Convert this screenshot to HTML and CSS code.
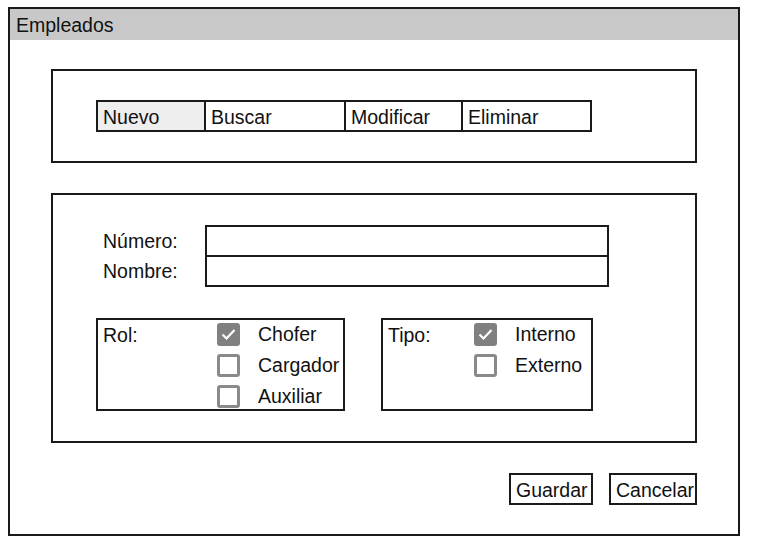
FILE: index.html
```html
<!DOCTYPE html>
<html lang="es">
<head>
<meta charset="utf-8">
<title>Empleados</title>
<link rel="stylesheet" href="styles.css">
</head>
<body>
<div class="window">
  <div class="titlebar">Empleados</div>
  <div class="content">
    <section class="panel panel-toolbar">
      <div class="toolbar">
        <div class="tab tab-nuevo active">Nuevo</div>
        <div class="tab tab-buscar">Buscar</div>
        <div class="tab tab-modificar">Modificar</div>
        <div class="tab tab-eliminar">Eliminar</div>
      </div>
    </section>
    <section class="panel panel-form">
      <div class="fields">
        <div class="field-row"><label class="field-label">Número:</label><div class="input"></div></div>
        <div class="field-row second"><label class="field-label">Nombre:</label><div class="input"></div></div>
      </div>
      <div class="groups">
        <div class="group group-rol">
          <div class="group-label">Rol:</div>
          <div class="options">
            <div class="option"><span class="box checked"><svg viewBox="0 0 23 23" width="23" height="23"><path d="M5.5 11.5 L9.5 15.5 L17.5 7" fill="none" stroke="#fff" stroke-width="2.2"/></svg></span><span>Chofer</span></div>
            <div class="option"><span class="box"></span><span>Cargador</span></div>
            <div class="option"><span class="box"></span><span>Auxiliar</span></div>
          </div>
        </div>
        <div class="group group-tipo">
          <div class="group-label">Tipo:</div>
          <div class="options">
            <div class="option"><span class="box checked"><svg viewBox="0 0 23 23" width="23" height="23"><path d="M5.5 11.5 L9.5 15.5 L17.5 7" fill="none" stroke="#fff" stroke-width="2.2"/></svg></span><span>Interno</span></div>
            <div class="option"><span class="box"></span><span>Externo</span></div>
          </div>
        </div>
      </div>
    </section>
    <div class="actions">
      <button class="btn btn-guardar">Guardar</button>
      <button class="btn btn-cancelar">Cancelar</button>
    </div>
  </div>
</div>
</body>
</html>
```
FILE: styles.css
```css
* { box-sizing: border-box; }
body {
  margin: 0;
  background: #fff;
  font-family: "Liberation Sans", Arial, sans-serif;
  font-size: 19.5px;
  color: #111;
}
.window {
  margin: 7px 0 0 8px;
  width: 732px;
  height: 529px;
  border: 2px solid #1a1a1a;
  display: flex;
  flex-direction: column;
}
.titlebar {
  height: 31px;
  line-height: 31px;
  padding-top: 1px;
  background: #c8c8c8;
  padding-left: 6px;
}
.content {
  padding: 29px 41px 0 41px;
  display: flex;
  flex-direction: column;
}
.panel {
  border: 2px solid #1a1a1a;
}
.panel-toolbar {
  padding: 29px 43px;
}
.toolbar {
  display: flex;
  width: fit-content;
  height: 32px;
  border: 2px solid #1a1a1a;
}
.tab {
  line-height: 25px;
  padding: 3px 0 0 5px;
  border-left: 2px solid #1a1a1a;
}
.tab-nuevo { width: 106px; border-left: none; }
.tab-buscar { width: 140px; }
.tab-modificar { width: 117px; }
.tab-eliminar { width: 129px; }
.tab.active { background: #eeeeee; }

.panel-form {
  margin-top: 30px;
  height: 250px;
  padding: 30px 0 0 43px;
}
.field-row {
  display: flex;
  align-items: center;
}
.field-row.second { margin-top: -2px; }
.field-label {
  width: 109px;
  padding-left: 7px;
  padding-top: 1px;
}
.input {
  width: 404px;
  height: 32px;
  border: 2px solid #1a1a1a;
}
.groups {
  display: flex;
  gap: 36px;
  margin-top: 31px;
}
.group {
  display: flex;
  height: 93px;
  border: 2px solid #1a1a1a;
  padding-left: 5px;
}
.group-rol { width: 249px; }
.group-tipo { width: 212px; }
.group-label {
  line-height: 31px;
  flex: none;
}
.group-rol .group-label { width: 114px; }
.group-tipo .group-label { width: 86px; }
.options {
  margin-top: -1px;
}
.option {
  display: flex;
  align-items: center;
  height: 31px;
  white-space: nowrap;
}
.box {
  flex: none;
  width: 23px;
  height: 23px;
  margin-right: 18px;
  border: 3px solid #8a8a8a;
  border-radius: 3px;
  background: #fff;
}
.box.checked {
  border: none;
  background: #808080;
}
.box svg { display: block; }
.actions {
  display: flex;
  justify-content: flex-end;
  gap: 16px;
  margin-top: 30px;
}
.btn {
  height: 32px;
  border: 2px solid #1a1a1a;
  background: #fff;
  font: inherit;
  color: #111;
  padding: 3px 0 0 5px;
  line-height: 25px;
  text-align: left;
  white-space: nowrap;
}
.btn-guardar { width: 84px; }
.btn-cancelar { width: 88px; }
```
